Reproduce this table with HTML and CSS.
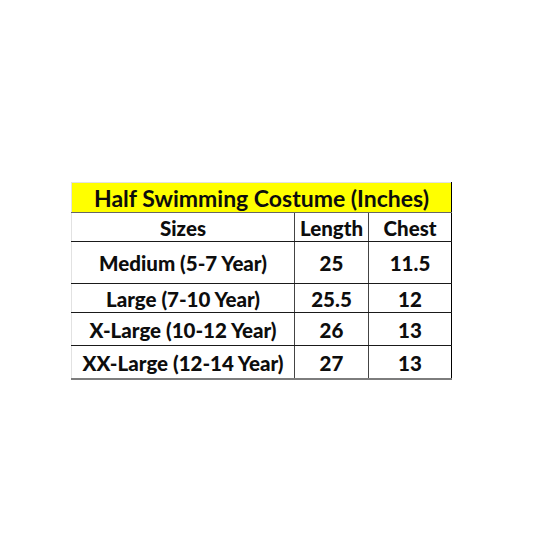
FILE: index.html
```html
<!DOCTYPE html>
<html>
<head>
<meta charset="utf-8">
<link rel="stylesheet" href="styles.css">
</head>
<body>
<div class="page">
<table class="size-table">
  <colgroup><col class="c1"><col class="c2"><col class="c3"></colgroup>
  <tr class="title-row"><th colspan="3">Half Swimming Costume (Inches)</th></tr>
  <tr class="head-row"><td>Sizes</td><td>Length</td><td>Chest</td></tr>
  <tr class="r-medium"><td>Medium (5-7 Year)</td><td>25</td><td>11.5</td></tr>
  <tr class="r-large"><td>Large (7-10 Year)</td><td>25.5</td><td>12</td></tr>
  <tr class="r-xl"><td>X-Large (10-12 Year)</td><td>26</td><td>13</td></tr>
  <tr class="r-xxl"><td>XX-Large (12-14 Year)</td><td>27</td><td>13</td></tr>
</table>
</div>
</body>
</html>
```
FILE: styles.css
```css
html, body { margin: 0; padding: 0; background: #fff; }
.page { padding: 182px 0 0 71px; }
.size-table {
  border-collapse: collapse;
  font-family: "Lato", "Liberation Sans", sans-serif;
  font-weight: 900;
  color: #0d0d0d;
  border-left: 1px solid #e2e2e2;
  border-top: 1px solid #e2e2e2;
  border-right: 1px solid #000;
  border-bottom: 2px solid #7d7d7d;
}
.c1 { width: 223px; }
.c2 { width: 74px; }
.c3 { width: 83px; }
.size-table td, .size-table th {
  padding: 2px 0 0 0;
  text-align: center;
  border-bottom: 1px solid #1a1a1a;
  border-left: 1px solid #444;
  font-size: 20.5px;
  line-height: 1;
}
.size-table td:first-child { border-left: none; }
.title-row th {
  background: #ffff00;
  height: 27px;
  font-size: 23px;
  border-bottom: 1px solid #666;
  border-left: none;
}
.head-row td { height: 26px; }
.r-medium td { height: 39px; }
.r-large td { height: 26px; }
.r-xl td { height: 30px; }
.r-xxl td { height: 30px; border-bottom: none; }
```
